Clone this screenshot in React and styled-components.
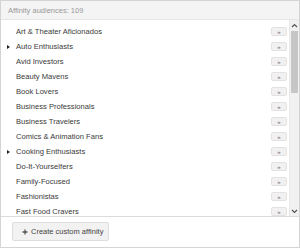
import React from 'react'
import styled, { createGlobalStyle } from 'styled-components'

const GlobalStyle = createGlobalStyle`
    html, body {
        margin: 0;
        padding: 0;
        background: #ffffff;
    }
    * {
        box-sizing: border-box;
    }
`

const audiences = [
    { name: 'Art & Theater Aficionados' },
    { name: 'Auto Enthusiasts', children: true },
    { name: 'Avid Investors' },
    { name: 'Beauty Mavens' },
    { name: 'Book Lovers' },
    { name: 'Business Professionals' },
    { name: 'Business Travelers' },
    { name: 'Comics & Animation Fans' },
    { name: 'Cooking Enthusiasts', children: true },
    { name: 'Do-It-Yourselfers' },
    { name: 'Family-Focused' },
    { name: 'Fashionistas' },
    { name: 'Fast Food Cravers' },
]

const App = () => {
    return (
        <>
            <GlobalStyle />
            <Widget>
                <Header>Affinity audiences: 109</Header>
                <Body>
                    <List>
                        {audiences.map((item) => (
                            <Row key={item.name}>
                                <CaretCell>{item.children && <Caret />}</CaretCell>
                                <Label>{item.name}</Label>
                                <AddButton>»</AddButton>
                            </Row>
                        ))}
                    </List>
                    <Scrollbar>
                        <ScrollArrow>
                            <svg width="7" height="5" viewBox="0 0 7 5">
                                <path d="M1 4 L3.5 1.5 L6 4" fill="none" stroke="#555" strokeWidth="1.2" />
                            </svg>
                        </ScrollArrow>
                        <Thumb />
                        <Spacer />
                        <ScrollArrow>
                            <svg width="7" height="5" viewBox="0 0 7 5">
                                <path d="M1 1 L3.5 3.5 L6 1" fill="none" stroke="#555" strokeWidth="1.2" />
                            </svg>
                        </ScrollArrow>
                    </Scrollbar>
                </Body>
                <Footer>
                    <CreateButton>
                        <svg width="6" height="6" viewBox="0 0 6 6">
                            <path d="M3 0.5 V5.5 M0.5 3 H5.5" stroke="#555" strokeWidth="1.3" />
                        </svg>
                        <span>Create custom affinity</span>
                    </CreateButton>
                </Footer>
            </Widget>
        </>
    )
}

const Widget = styled.div`
    width: 300px;
    height: 248px;
    border: 1px solid #d4d4d4;
    display: flex;
    flex-direction: column;
    font-family: "Liberation Sans", Arial, sans-serif;
    background: #fff;
`

const Header = styled.div`
    height: 19px;
    flex: none;
    display: flex;
    align-items: center;
    padding-left: 7px;
    background: #f4f4f4;
    border-bottom: 1px solid #e6e6e6;
    color: #999;
    font-size: 7.5px;
`

const Body = styled.div`
    flex: 1;
    display: flex;
    min-height: 0;
`

const List = styled.div`
    flex: 1;
    padding-top: 4px;
    overflow: hidden;
`

const Row = styled.div`
    height: 15px;
    display: flex;
    align-items: center;
    padding-right: 2px;
`

const CaretCell = styled.span`
    width: 15px;
    padding-left: 6px;
    display: flex;
    align-items: center;
`

const Caret = styled.span`
    width: 0;
    height: 0;
    border-top: 2px solid transparent;
    border-bottom: 2px solid transparent;
    border-left: 3px solid #222;
`

const Label = styled.span`
    flex: 1;
    color: #3a3a3a;
    font-size: 7.6px;
    white-space: nowrap;
`

const AddButton = styled.span`
    width: 16px;
    height: 9px;
    display: flex;
    align-items: center;
    justify-content: center;
    background: #f1f1f1;
    border: 1px solid #e2e2e2;
    border-radius: 2px;
    color: #666;
    font-size: 6px;
    line-height: 1;
`

const Scrollbar = styled.div`
    width: 10px;
    flex: none;
    display: flex;
    flex-direction: column;
    background: #f1f1f1;
    border-left: 1px solid #e8e8e8;
`

const ScrollArrow = styled.div`
    height: 10px;
    display: flex;
    align-items: center;
    justify-content: center;
`

const Thumb = styled.div`
    height: 62px;
    margin: 1px 1px 0;
    background: #c6c6c6;
`

const Spacer = styled.div`
    flex: 1;
`

const Footer = styled.div`
    height: 31px;
    flex: none;
    border-top: 1px solid #dcdcdc;
    padding: 5px 0 0 11px;
`

const CreateButton = styled.div`
    width: 97px;
    height: 19px;
    display: flex;
    align-items: center;
    padding-left: 9px;
    gap: 3px;
    background: #f2f2f2;
    border: 1px solid #dedede;
    border-radius: 2px;
    color: #444;
    font-size: 7.5px;
    line-height: 1;
    white-space: nowrap;
`

export default App
